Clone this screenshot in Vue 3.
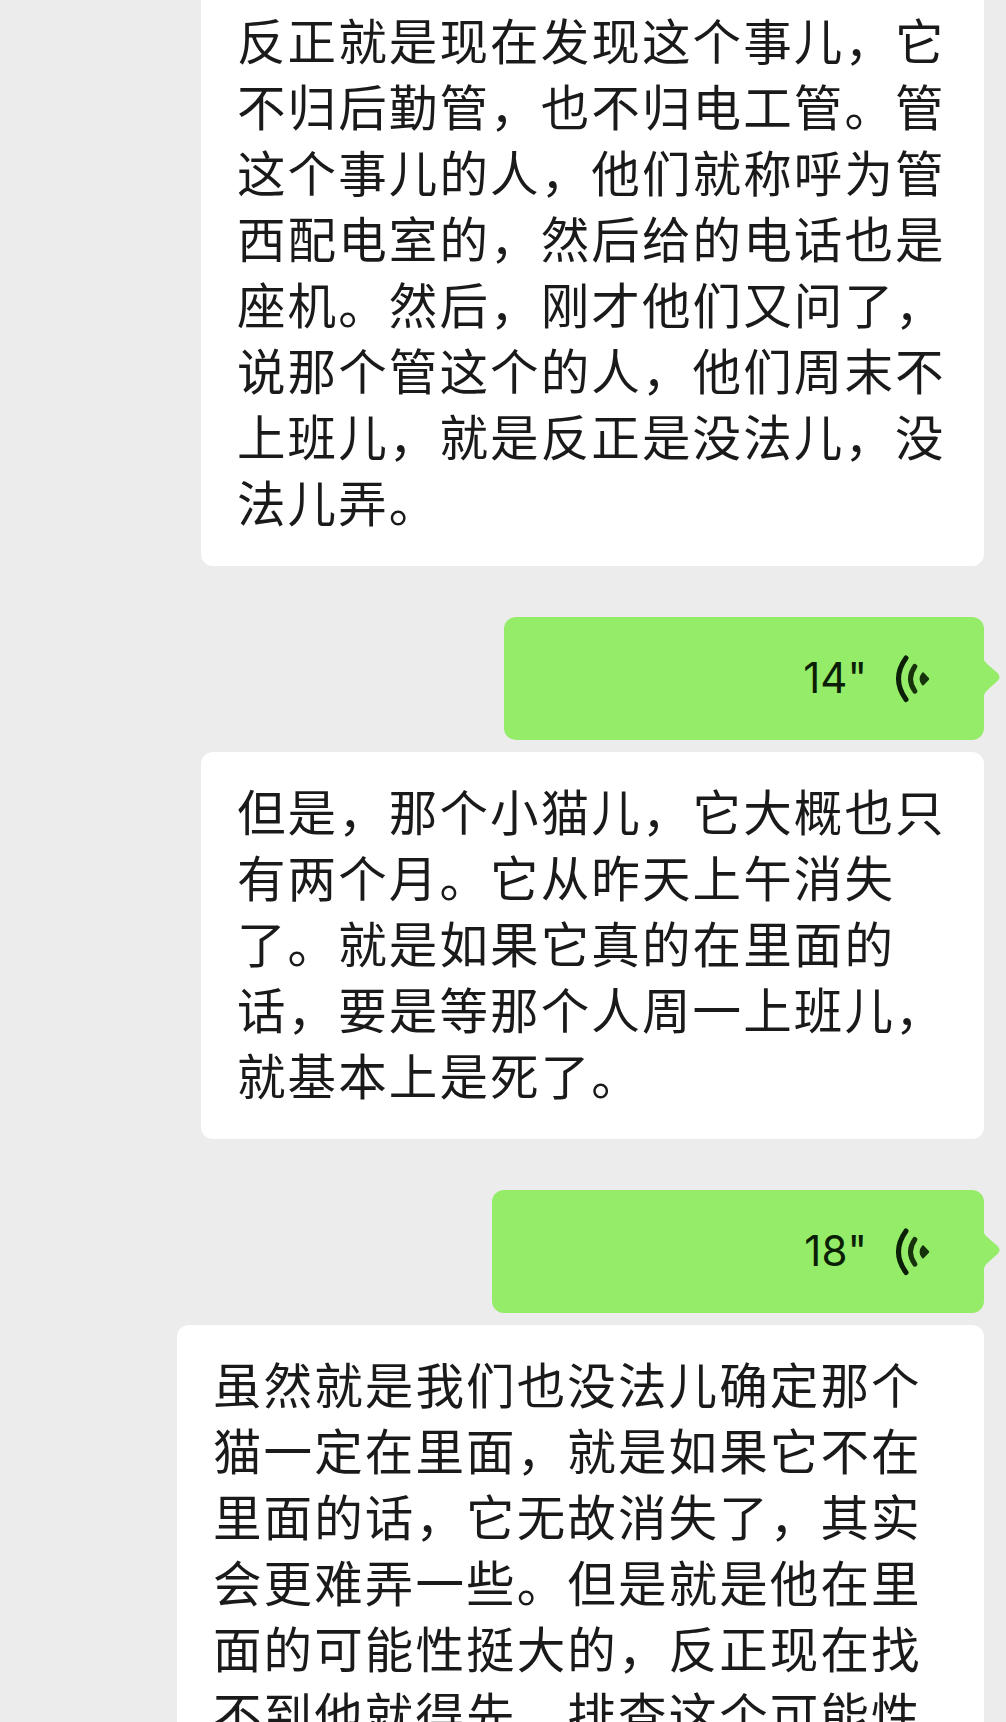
<script setup>

import { reactive } from 'vue'

const messages = reactive([
    {
        id: 1,
        type: 'text',
        width: 783,
        cut: true,
        lines: [
            '反正就是现在发现这个事儿，它',
            '不归后勤管，也不归电工管。管',
            '这个事儿的人，他们就称呼为管',
            '西配电室的，然后给的电话也是',
            '座机。然后，刚才他们又问了，',
            '说那个管这个的人，他们周末不',
            '上班儿，就是反正是没法儿，没',
            '法儿弄。'
        ]
    },
    { id: 2, type: 'voice', width: 480, seconds: 14 },
    {
        id: 3,
        type: 'text',
        width: 783,
        lines: [
            '但是，那个小猫儿，它大概也只',
            '有两个月。它从昨天上午消失',
            '了。就是如果它真的在里面的',
            '话，要是等那个人周一上班儿，',
            '就基本上是死了。'
        ]
    },
    { id: 4, type: 'voice', width: 492, seconds: 18 },
    {
        id: 5,
        type: 'text',
        width: 807,
        lines: [
            '虽然就是我们也没法儿确定那个',
            '猫一定在里面，就是如果它不在',
            '里面的话，它无故消失了，其实',
            '会更难弄一些。但是就是他在里',
            '面的可能性挺大的，反正现在找',
            '不到他就得先，排查这个可能性'
        ]
    }
]);

</script>

<template>
    <div class="chat">
        <template v-for="message in messages" :key="message.id">
            <div v-if="message.type === 'voice'" class="voice" :style="{ width: message.width + 'px' }">
                <span class="duration">{{ message.seconds }}"</span>
                <svg class="waves" width="36" height="50" viewBox="0 0 36 50">
                    <path d="M11 4Q-4 24.7 11 45.5" stroke="#0a1f05" stroke-width="5" />
                    <path d="M19.8 12.5Q11.2 24.8 19.8 37.2" stroke="#17330c" stroke-width="5" />
                    <path d="M28 19.5L33 24.9L28 30.3Q23.6 24.9 28 19.5Z" fill="#17330c" stroke="#17330c" stroke-width="2.4" />
                </svg>
                <svg class="tail" width="16" height="36" viewBox="0 0 16 36">
                    <path d="M0 0Q1 2.5 4 4.8L13.5 13Q17.5 17 13.5 21L4 29.5Q1 32 0 35Z" />
                </svg>
            </div>
            <div v-else class="bubble" :class="{ cut: message.cut }" :style="{ width: message.width + 'px' }">
                <p v-for="line in message.lines" :key="line">{{ line }}</p>
            </div>
        </template>
    </div>
</template>

<style>
body {
    background: #ececec;
}
</style>

<style scoped>
.chat {
    display: flex;
    flex-direction: column;
    align-items: flex-end;
    height: 1722px;
    padding-right: 22px;
    overflow: hidden;
    box-sizing: border-box;
    background: #ececec;
    font-family: "Noto Sans CJK SC", sans-serif;
}

.bubble {
    flex-shrink: 0;
    box-sizing: border-box;
    padding: 25px 0 32px 36px;
    border-radius: 12px;
    background: #fff;
    color: #1a1a1a;
}

/* first message is scrolled past the top edge */
.bubble.cut {
    padding-top: 6px;
    border-radius: 0 0 12px 12px;
}

.bubble p {
    margin: 0;
    height: 66px;
    font-size: 48.5px;
    line-height: 66px;
    letter-spacing: 2.12px;
    white-space: nowrap;
    text-spacing-trim: space-all;
}

.voice {
    position: relative;
    display: flex;
    flex-shrink: 0;
    align-items: center;
    justify-content: flex-end;
    box-sizing: border-box;
    height: 123px;
    margin: 51px 0 12px;
    padding-right: 53px;
    border-radius: 12px;
    background: #95ec69;
}

.duration {
    margin-right: 28px;
    padding-bottom: 2px;
    color: #0a1f05;
    font-family: Inter, sans-serif;
    font-size: 42px;
    line-height: 50px;
}

.waves {
    fill: none;
    stroke-linecap: round;
    stroke-linejoin: round;
}

.tail {
    position: absolute;
    top: 43px;
    right: -16px;
    fill: #95ec69;
}
</style>
